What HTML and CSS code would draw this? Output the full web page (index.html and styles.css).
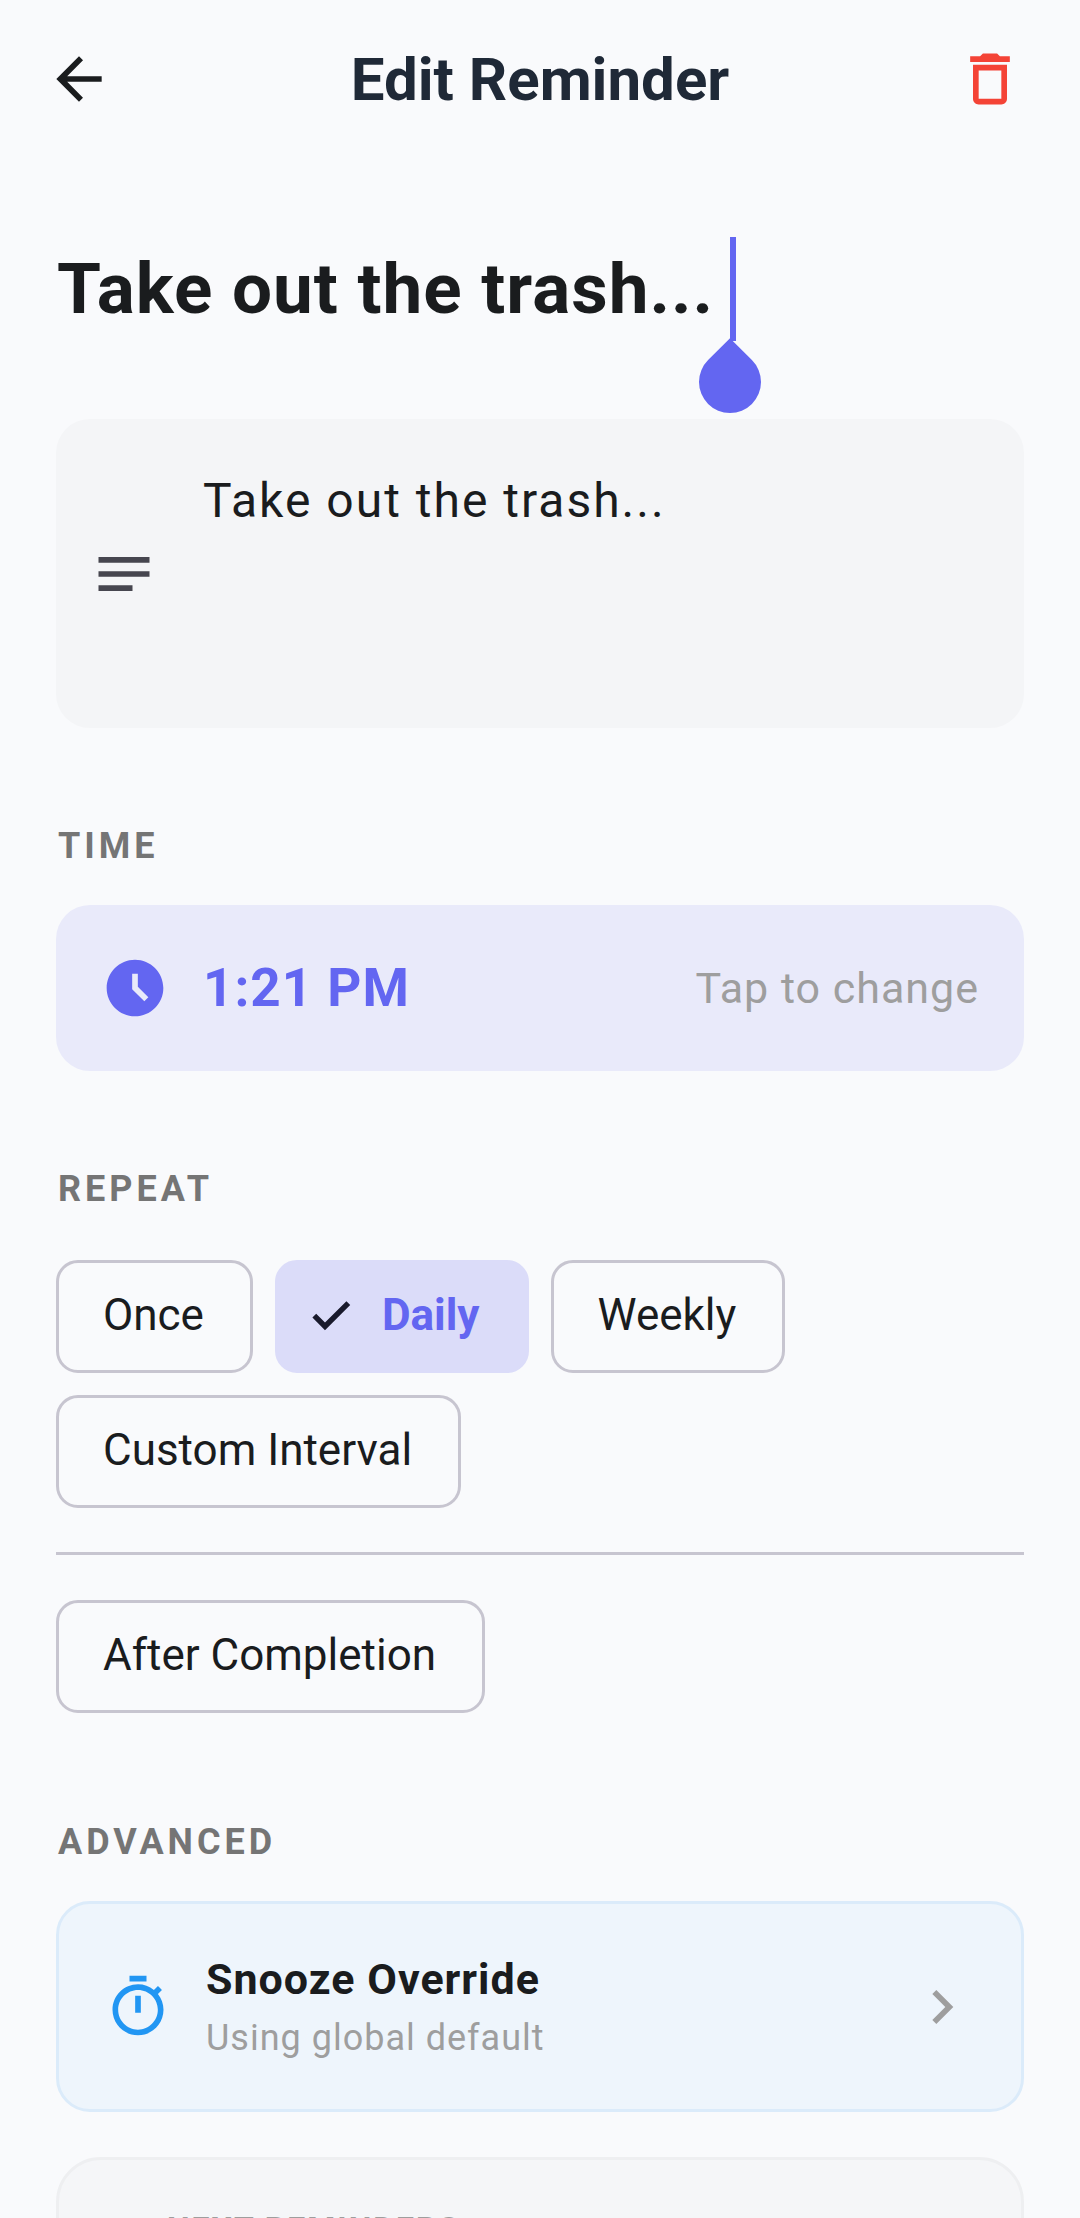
FILE: index.html
```html
<!DOCTYPE html>
<html lang="en">
<head>
<meta charset="utf-8">
<meta name="viewport" content="width=device-width, initial-scale=1">
<title>Edit Reminder</title>
<link rel="stylesheet" href="styles.css">
</head>
<body>
<div class="app">
  <header class="app-bar">
    <button class="icon-button" type="button" aria-label="Back">
      <svg class="icon" viewBox="0 0 24 24" aria-hidden="true"><path d="M20 11H7.83l5.59-5.59L12 4l-8 8 8 8 1.41-1.41L7.83 13H20v-2z"/></svg>
    </button>
    <h1 class="app-title">Edit Reminder</h1>
    <button class="icon-button danger" type="button" aria-label="Delete reminder">
      <svg class="icon" viewBox="0 0 24 24" aria-hidden="true"><path d="M6 19c0 1.1.9 2 2 2h8c1.1 0 2-.9 2-2V7H6v12zM8 9h8v10H8V9zm7.5-5l-1-1h-5l-1 1H5v2h14V4h-3.5z"/></svg>
    </button>
  </header>

  <main class="content">
    <div class="title-field">
      <input class="title-input" type="text" aria-label="Title" value="Take out the trash...">
      <span class="caret"></span>
      <span class="caret-handle"></span>
    </div>

    <div class="note-card">
      <svg class="icon" viewBox="0 0 24 24" aria-hidden="true"><path d="M3 18h12v-2H3v2zM3 6v2h18V6H3zm0 7h18v-2H3v2z"/></svg>
      <textarea class="note-input" rows="3" aria-label="Notes">Take out the trash...</textarea>
    </div>

    <h2 class="section-label">TIME</h2>
    <button class="time-card" type="button">
      <svg class="icon" viewBox="0 0 24 24" aria-hidden="true"><path fill-rule="evenodd" d="M12 2C6.480 2 2 6.480 2 12s4.480 10 10 10 10-4.480 10-10S17.520 2 12 2zM15.290 16.710L11 12.410V7h2v4.590l3.710 3.710-1.420 1.410z"/></svg>
      <span class="time-value">1:21 PM</span>
      <span class="time-hint">Tap to change</span>
    </button>

    <h2 class="section-label">REPEAT</h2>
    <div class="chips" role="radiogroup" aria-label="Repeat">
      <label class="chip"><input class="chip-input" type="radio" name="repeat">Once</label>
      <label class="chip selected"><input class="chip-input" type="radio" name="repeat" checked><svg class="chip-check" viewBox="0 0 24 24" aria-hidden="true"><path d="M9 15.800L4.600 11.400l-1.900 1.900L9 19.600 21.600 7l-1.900-1.900L9 15.800z"/></svg>Daily</label>
      <label class="chip"><input class="chip-input" type="radio" name="repeat">Weekly</label>
      <label class="chip"><input class="chip-input" type="radio" name="repeat">Custom Interval</label>
      <hr class="divider">
      <label class="chip"><input class="chip-input" type="radio" name="repeat">After Completion</label>
    </div>

    <h2 class="section-label">ADVANCED</h2>
    <button class="snooze-card" type="button">
      <svg class="icon snooze-icon" viewBox="0 0 24 24" aria-hidden="true"><path d="M15 1H9v2h6V1zm-4 13h2V8h-2v6zm8.030-6.610l1.420-1.420c-.43-.51-.9-.99-1.410-1.410l-1.420 1.420A8.962 8.962 0 0 0 12 4c-4.970 0-9 4.030-9 9s4.020 9 9 9 9-4.030 9-9c0-2.120-.74-4.070-1.970-5.610zM12 20c-3.870 0-7-3.130-7-7s3.130-7 7-7 7 3.130 7 7-3.130 7-7 7z"/></svg>
      <span class="snooze-text">
        <span class="snooze-title">Snooze Override</span>
        <span class="snooze-sub">Using global default</span>
      </span>
      <svg class="icon chevron" viewBox="0 0 24 24" aria-hidden="true"><path d="M10 6L8.590 7.410 13.170 12l-4.580 4.590L10 18l6-6z"/></svg>
    </button>

    <section class="next-card">
      <h2 class="next-title">NEXT REMINDERS</h2>
    </section>
  </main>
</div>
</body>
</html>
```

FILE: styles.css
```css
* {
  box-sizing: border-box;
}

body {
  margin: 0;
  background: #f9fafc;
  color: #1a1c1e;
  font-family: Roboto, "Noto Sans", sans-serif;
}

button,
input,
textarea {
  border: 0;
  padding: 0;
  background: none;
  color: inherit;
  font: inherit;
}

h1,
h2,
hr {
  margin: 0;
}

.app {
  display: flex;
  flex-direction: column;
  height: 100vh;
  overflow: hidden;
}

.icon {
  flex: none;
  width: 68px;
  height: 68px;
  fill: currentColor;
}

.app-bar {
  flex: none;
  display: grid;
  grid-template-columns: 1fr auto 1fr;
  align-items: center;
  height: 158px;
  padding: 0 11px;
}

.icon-button {
  display: flex;
  align-items: center;
  justify-content: center;
  width: 136px;
  height: 136px;
}

.danger {
  justify-self: end;
  margin-right: 11px;
  color: #f44336;
}

.app-title {
  padding-top: 2px;
  color: #1f2937;
  font-size: 60px;
  font-weight: 700;
  line-height: 80px;
}

.content {
  flex: 1;
  min-height: 0;
  overflow: hidden;
  padding: 56px 56px 0;
}

.title-field {
  position: relative;
  padding: 22px 0 44px;
}

.title-input {
  display: block;
  width: 100%;
  height: 104px;
  padding-left: 1px;
  outline: 0;
  font-size: 71px;
  font-weight: 700;
  letter-spacing: 1px;
}

.caret {
  position: absolute;
  top: 23px;
  left: 674px;
  width: 6px;
  height: 104px;
  background: #6366f1;
}

.caret-handle {
  position: absolute;
  top: 137px;
  left: 643px;
  width: 62px;
  height: 62px;
  border-radius: 0 50% 50% 50%;
  background: #6366f1;
  transform: rotate(45deg);
}

.note-card {
  display: flex;
  align-items: center;
  gap: 45px;
  height: 309px;
  margin-top: 35px;
  padding: 45px 34px;
  border-radius: 34px;
  background: #f4f5f7;
}

.note-card .icon {
  color: #46464f;
}

.note-input {
  flex: 1;
  align-self: stretch;
  outline: 0;
  resize: none;
  overflow: hidden;
  font-size: 48px;
  line-height: 74px;
  letter-spacing: 2px;
}

.section-label {
  margin: 92px 0 32px 2px;
  color: #757575;
  font-size: 36px;
  font-weight: 700;
  line-height: 53px;
  letter-spacing: 4px;
}

.time-card {
  display: flex;
  align-items: center;
  width: 100%;
  height: 166px;
  padding: 0 45px;
  border-radius: 34px;
  background: #e9eafa;
}

.time-card .icon,
.time-value {
  color: #6366f1;
}

.time-value {
  flex: 1;
  margin-left: 34px;
  text-align: left;
  font-size: 53px;
  font-weight: 700;
  letter-spacing: 1px;
}

.time-hint {
  color: #9e9e9e;
  font-size: 43px;
  letter-spacing: 1px;
}

.chips {
  display: flex;
  flex-wrap: wrap;
  gap: 22px;
  padding: 12px 0 11px;
}

.chip {
  position: relative;
  display: flex;
  align-items: center;
  height: 113px;
  padding: 0 46px 4px 44px;
  border: 3px solid #c7c5d0;
  border-radius: 22px;
  font-size: 44px;
}

.chip-input {
  position: absolute;
  inset: 0;
  margin: 0;
  appearance: none;
  cursor: pointer;
}

.selected {
  padding-left: 29px;
  border-color: #dbdcf9;
  background: #dbdcf9;
  color: #6366f1;
  font-weight: 700;
}

.chip-check {
  width: 48px;
  height: 48px;
  margin-right: 27px;
  fill: #191a2c;
}

.divider {
  width: 100%;
  height: 3px;
  margin: 22px 0 23px;
  border: 0;
  background: #c7c5d0;
}

.snooze-card {
  display: flex;
  align-items: center;
  width: 100%;
  height: 211px;
  padding: 0 45px;
  border: 3px solid #dbebfa;
  border-radius: 34px;
  background: #eef5fc;
}

.snooze-icon {
  color: #2196f3;
}

.snooze-text {
  flex: 1;
  display: flex;
  flex-direction: column;
  gap: 2px;
  margin-left: 34px;
  text-align: left;
}

.snooze-title {
  font-size: 43px;
  font-weight: 700;
  line-height: 61px;
  letter-spacing: 1px;
}

.snooze-sub {
  color: #9e9e9e;
  font-size: 36px;
  line-height: 53px;
  letter-spacing: 1px;
}

.chevron {
  color: #9e9e9e;
}

.next-card {
  margin-top: 45px;
  padding: 46px 108px;
  border: 3px solid #eeeff1;
  border-radius: 45px;
  background: #f5f6f8;
}

.next-title {
  color: #9e9e9e;
  font-size: 32px;
  font-weight: 700;
  line-height: 45px;
  letter-spacing: 2px;
}
```
